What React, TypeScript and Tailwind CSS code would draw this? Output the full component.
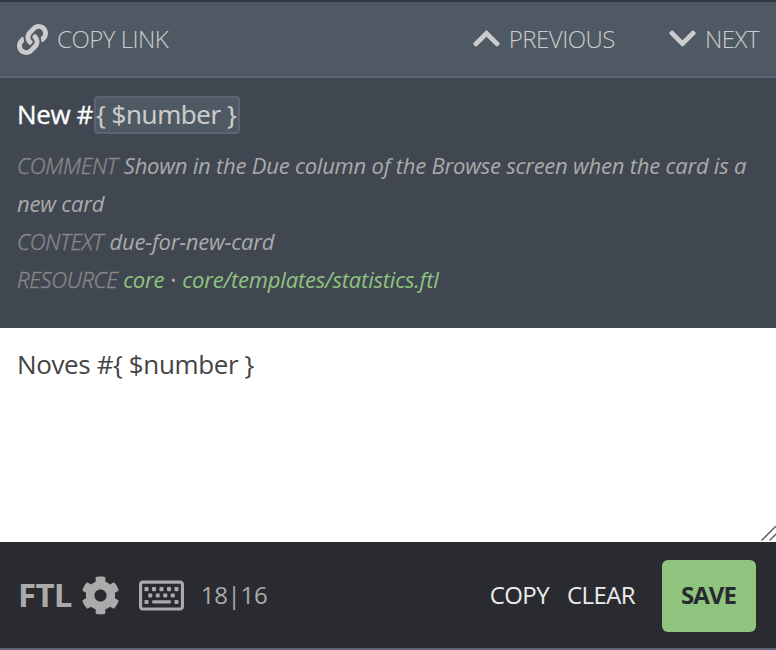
import React from "react";
import { FaLink, FaChevronUp, FaChevronDown, FaCog, FaRegKeyboard } from "react-icons/fa";

function Toolbar() {
  return (
    <header className="flex h-[78px] items-center border-y-2 border-t-[#333941] border-b-[#5e6475] bg-[#4f5964] px-[17px] text-[24px] leading-[34px] font-light tracking-[-0.5px] text-[#cccccc]">
      <button className="flex items-center gap-[10px]">
        <FaLink className="size-[31px]" />
        <span className="-ml-px">COPY LINK</span>
      </button>
      <button className="ml-auto flex items-center gap-[7px] pb-px">
        <FaChevronUp className="size-[31px]" />
        <span className="pt-px">PREVIOUS</span>
      </button>
      <button className="ml-[52px] flex items-center gap-[7px] pb-px">
        <FaChevronDown className="size-[31px]" />
        <span className="pt-px">NEXT</span>
      </button>
    </header>
  );
}

function Label({ children }: { children: string }) {
  return <span className="mr-px font-light tracking-[-0.3px] text-[#888888] [-webkit-text-stroke:0.4px_#888888]">{children}</span>;
}

function Original() {
  return (
    <section className="h-[250px] bg-[#414751] px-[17px] pt-[18px]">
      <p className="flex h-[38px] items-center text-[26px] tracking-[-0.4px] text-white">
        <span className="-mt-[2px] mr-px whitespace-pre [-webkit-text-stroke:0.3px_white]">New #</span>
        <mark className="flex h-[38px] items-center rounded-[4px] border-2 border-[#5e6475] bg-[#4f5964] pr-[2px] pb-[2px] text-[#cccccc] [-webkit-text-stroke:0.2px_#cccccc]">
          {"{ $number }"}
        </mark>
      </p>
      <div className="mt-[12px] text-[22px] leading-[38px] tracking-[-0.22px] text-[#aaaaaa] italic">
        <p><Label>COMMENT</Label> Shown in the Due column of the Browse screen when the card is a new card</p>
        <p><Label>CONTEXT</Label> due-for-new-card</p>
        <p>
          <Label>RESOURCE</Label> <a className="-ml-px text-[#8fc47f]">core</a>
          <span className="mx-[6.5px] inline-block text-[14px] leading-none not-italic align-[2px]">•</span>
          <a className="tracking-[-0.2px] text-[#8fc47f]">core/templates/statistics.ftl</a>
        </p>
      </div>
    </section>
  );
}

function Translation() {
  return (
    <section className="relative h-[214px] bg-white px-[17px] pt-[17px] text-[26px] leading-[38px] tracking-[-0.38px] text-[#444444]">
      <p>{"Noves #{ $number }"}</p>
      <svg className="absolute right-0 bottom-0" width="16" height="16" viewBox="0 0 16 16" fill="none" stroke="#555" strokeWidth="1.3">
        <path d="M1.5 14.5L16 0M9.5 14.5L16 8" />
      </svg>
    </section>
  );
}

function Footer() {
  return (
    <footer className="flex h-[108px] items-center border-b-2 border-[#5e6475] bg-[#2a2b30] pr-5 pl-[18px] text-[24px] text-[#aaaaaa]">
      <span className="text-[33px] font-bold tracking-[-0.7px]">FTL</span>
      <FaCog className="ml-[9px] size-[39px]" />
      <FaRegKeyboard className="ml-[19px] size-[45px]" />
      <span className="ml-[17px] tracking-[-0.3px]">18|16</span>
      <div className="ml-auto flex items-center tracking-[-0.6px] text-[#ebebeb]">
        <button>COPY</button>
        <button className="ml-[18px]">CLEAR</button>
        <button className="mt-[2px] ml-[27px] h-[72px] w-[94px] rounded-[6px] bg-[#8fc47f] pr-[1px] pb-[2px] font-bold tracking-[-0.9px] text-[#272a2f]">SAVE</button>
      </div>
    </footer>
  );
}

export default function App() {
  return (
    <main className="h-[650px] w-[776px] overflow-hidden font-['Open_Sans',sans-serif]">
      <Toolbar />
      <Original />
      <Translation />
      <Footer />
    </main>
  );
}
